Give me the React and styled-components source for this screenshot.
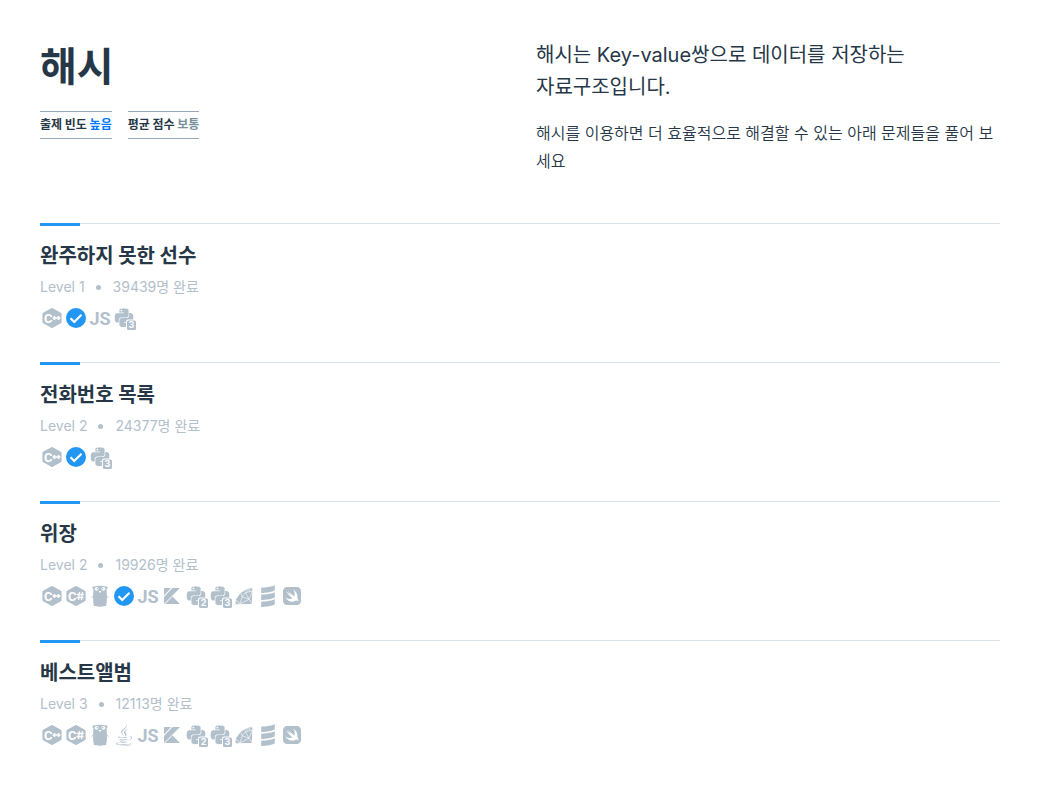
import React from "react";
import styled, { createGlobalStyle } from "styled-components";
import { SiPython, SiScala, SiSwift } from "react-icons/si";
import { FaJava } from "react-icons/fa";

const problems = [
  {
    title: "완주하지 못한 선수",
    level: 1,
    finished: 39439,
    languages: ["cpp", "done", "js", "python3"],
  },
  {
    title: "전화번호 목록",
    level: 2,
    finished: 24377,
    languages: ["cpp", "done", "python3"],
  },
  {
    title: "위장",
    level: 2,
    finished: 19926,
    languages: [
      "cpp",
      "csharp",
      "go",
      "done",
      "js",
      "kotlin",
      "python2",
      "python3",
      "ruby",
      "scala",
      "swift",
    ],
  },
  {
    title: "베스트앨범",
    level: 3,
    finished: 12113,
    languages: [
      "cpp",
      "csharp",
      "go",
      "java",
      "js",
      "kotlin",
      "python2",
      "python3",
      "ruby",
      "scala",
      "swift",
    ],
  },
];

const Hexagon = ({ children }) => (
  <Glyph viewBox="0 0 24 24">
    <path d="M11.2 2.2a1.6 1.6 0 0 1 1.6 0l8 4.5q.8.5.8 1.4v7.8q0 .9-.8 1.4l-8 4.5a1.6 1.6 0 0 1-1.6 0l-8-4.5q-.8-.5-.8-1.4V8.1q0-.9.8-1.4z" />
    <HexLetter x="4" y="16.5">
      C
    </HexLetter>
    {children}
  </Glyph>
);

const Cpp = () => (
  <Hexagon>
    <path
      d="M12.5 12h4M14.5 10v4M16.5 12h4M18.5 10v4"
      stroke="#fff"
      strokeWidth="1.6"
    />
  </Hexagon>
);

const CSharp = () => (
  <Hexagon>
    <path
      d="M15.5 8l-1 8M18.5 8l-1 8M12.8 10.5h7M12.5 13.5h7"
      stroke="#fff"
      strokeWidth="1.3"
    />
  </Hexagon>
);

const Go = () => (
  <Glyph viewBox="0 0 24 24">
    <path d="M6.5 2.6Q12 .8 17.5 2.6q1.7-.8 2 .6.2 1.3-1 2 .4 2.5.3 5 .2 4 0 7.5-.1 2-.8 3.300l.5 1.200-1.600-.3Q12 23.400 7.100 21.900l-1.600.3.5-1.200q-.7-1.300-.8-3.300-.2-3.500 0-7.500-.1-2.500.3-5-1.200-.7-1-2 .3-1.400 2-.6z" />
    <path
      d="M5.5 12l-1.500 1.200M18.500 12l1.500 1.200"
      stroke="#b2c0cc"
      strokeLinecap="round"
    />
    <circle cx="8.700" cy="4.800" r="1.900" fill="#fff" />
    <circle cx="15.300" cy="4.800" r="1.900" fill="#fff" />
    <circle cx="9.300" cy="4.800" r=".8" />
    <circle cx="14.700" cy="4.800" r=".8" />
    <path d="M10.900 7h2.200v1h-.5v.8h-1.200V8h-.5z" fill="#fff" />
  </Glyph>
);

const Done = () => (
  <Glyph viewBox="0 0 24 24">
    <circle cx="12" cy="12" r="10" fill="#2196f3" />
    <path
      d="M6.500 12.300l3.700 3.700 7.300-7.300"
      fill="none"
      stroke="#fff"
      strokeWidth="2.200"
    />
  </Glyph>
);

const Js = () => (
  <Glyph viewBox="0 0 24 24">
    <JsLetters x="12" y="18.500" textAnchor="middle">
      JS
    </JsLetters>
  </Glyph>
);

const Kotlin = () => (
  <Glyph viewBox="0 0 24 24">
    <path d="M4 4h7L4 11.500zM12.500 4H20L4 20v-7zM12.500 12.500L20 20H5z" />
  </Glyph>
);

const Python = ({ version }) => (
  <Glyph viewBox="0 0 24 24">
    <SiPython x="2.500" y="2.300" size={19} />
    <rect x="14" y="13.500" width="11" height="11.500" rx="2" fill="#fff" />
    <rect x="15" y="14.500" width="9" height="9.500" rx="1.500" />
    <Version x="19.500" y="22.300" textAnchor="middle">
      {version}
    </Version>
  </Glyph>
);

const Ruby = () => (
  <Glyph viewBox="0 0 24 24">
    <path d="M17.200 4l3.200.5-.6 15.500L3.500 20.300l.4-4.800 4.600-6.500z" />
    <path
      d="M3.500 15.300l4.200 4.900 2.500-7.300 6.800 2.300-3.600-6.500L20.500 7M7.700 20.200l9.300-5 3.500 5M8.500 8.500l1.700 4.400 3.200-4.200L17.200 4l.3 3.700M17 15.200l3.500-8.200"
      fill="none"
      stroke="#fff"
      strokeWidth=".6"
    />
  </Glyph>
);

const Java = () => (
  <Glyph viewBox="0 0 24 24">
    <FaJava x="1" y="1" size={22} />
  </Glyph>
);

const Scala = () => (
  <Glyph viewBox="0 0 24 24">
    <SiScala x="1" y="1" size={22} />
  </Glyph>
);

const Swift = () => (
  <Glyph viewBox="0 0 24 24">
    <SiSwift x="3" y="3" size={18} />
  </Glyph>
);

const icons = {
  cpp: <Cpp />,
  csharp: <CSharp />,
  go: <Go />,
  done: <Done />,
  java: <Java />,
  js: <Js />,
  kotlin: <Kotlin />,
  python2: <Python version="2" />,
  python3: <Python version="3" />,
  ruby: <Ruby />,
  scala: <Scala />,
  swift: <Swift />,
};

const App = () => {
  return (
    <>
      <GlobalStyle />
      <Page>
        <Header>
          <div>
            <Title>해시</Title>
            <Tags>
              <Tag>
                출제 빈도 <Grade color="#0078ff">높음</Grade>
              </Tag>
              <Tag>
                평균 점수 <Grade color="#78909c">보통</Grade>
              </Tag>
            </Tags>
          </div>
          <div>
            <Lead>해시는 Key-value쌍으로 데이터를 저장하는 자료구조입니다.</Lead>
            <Description>
              해시를 이용하면 더 효율적으로 해결할 수 있는 아래 문제들을 풀어
              보세요
            </Description>
          </div>
        </Header>
        <List>
          {problems.map((problem) => (
            <Item key={problem.title}>
              <ItemTitle>
                <ItemLink href="#">{problem.title}</ItemLink>
              </ItemTitle>
              <Meta>
                <span>Level {problem.level}</span>
                <Dot />
                <span>{problem.finished}명 완료</span>
              </Meta>
              <Languages>
                {problem.languages.map((language) => (
                  <Language key={language}>{icons[language]}</Language>
                ))}
              </Languages>
            </Item>
          ))}
        </List>
      </Page>
    </>
  );
};

const korean = `"Noto Sans CJK KR", sans-serif`;

const GlobalStyle = createGlobalStyle`
  * {
    box-sizing: border-box;
  }
  body {
    margin: 0;
    background-color: #fff;
    color: #263747;
    font-family: Inter, ${korean};
  }
  h1, h2, p, ul {
    margin: 0;
    padding: 0;
  }
`;

const Page = styled.main`
  padding: 36px 64px 40px 40px;
`;

const Header = styled.header`
  display: grid;
  grid-template-columns: 1fr 1fr;
  gap: 32px;
  padding-bottom: 48px;
`;

const Title = styled.h1`
  font-family: ${korean};
  font-size: 40px;
  font-weight: 700;
  line-height: 56px;
`;

const Tags = styled.div`
  display: flex;
  gap: 16px;
  margin-top: 19px;
`;

const Tag = styled.div`
  padding: 3px 0 5px;
  border-top: 1px solid #98a8b9;
  border-bottom: 1px solid #98a8b9;
  font-family: ${korean};
  font-size: 12px;
  font-weight: 700;
  line-height: 18px;
`;

const Grade = styled.span`
  color: ${(props) => props.color};
`;

const Lead = styled.p`
  margin-top: 3px;
  font-size: 20px;
  line-height: 32px;
  word-break: keep-all;
`;

const Description = styled.p`
  margin-top: 16px;
  font-size: 16px;
  font-weight: 350;
  line-height: 28px;
`;

const List = styled.ul`
  list-style: none;
`;

const Item = styled.li`
  height: 139px;
  border-top: 1px solid #d7e2eb;

  &::before {
    content: "";
    display: block;
    width: 40px;
    height: 3px;
    margin-top: -1px;
    background-color: #2196f3;
  }
`;

const ItemTitle = styled.h2`
  padding-top: 13px;
  font-family: ${korean};
  font-size: 20px;
  font-weight: 700;
  line-height: 32px;
`;

const ItemLink = styled.a`
  color: inherit;
  text-decoration: none;
`;

const Meta = styled.div`
  display: flex;
  align-items: center;
  margin-top: 6px;
  color: #b2c0cc;
  font-size: 14px;
  line-height: 20px;
`;

const Dot = styled.span`
  width: 5px;
  height: 5px;
  margin: 0 12px 0 11px;
  border-radius: 50%;
  background-color: #b2c0cc;
`;

const Languages = styled.ul`
  display: flex;
  margin-top: 9px;
  list-style: none;
`;

const Language = styled.li`
  width: 24px;
  height: 24px;
`;

const Glyph = styled.svg`
  display: block;
  width: 24px;
  height: 24px;
  overflow: visible;
  fill: #b2c0cc;
  color: #b2c0cc;
`;

const HexLetter = styled.text`
  fill: #fff;
  font-family: Roboto, sans-serif;
  font-size: 13px;
  font-weight: 700;
`;

const JsLetters = styled.text`
  font-family: Roboto, sans-serif;
  font-size: 18px;
  font-weight: 700;
`;

const Version = styled.text`
  fill: #fff;
  font-family: Inter, sans-serif;
  font-size: 9px;
  font-weight: 700;
`;

export default App;
